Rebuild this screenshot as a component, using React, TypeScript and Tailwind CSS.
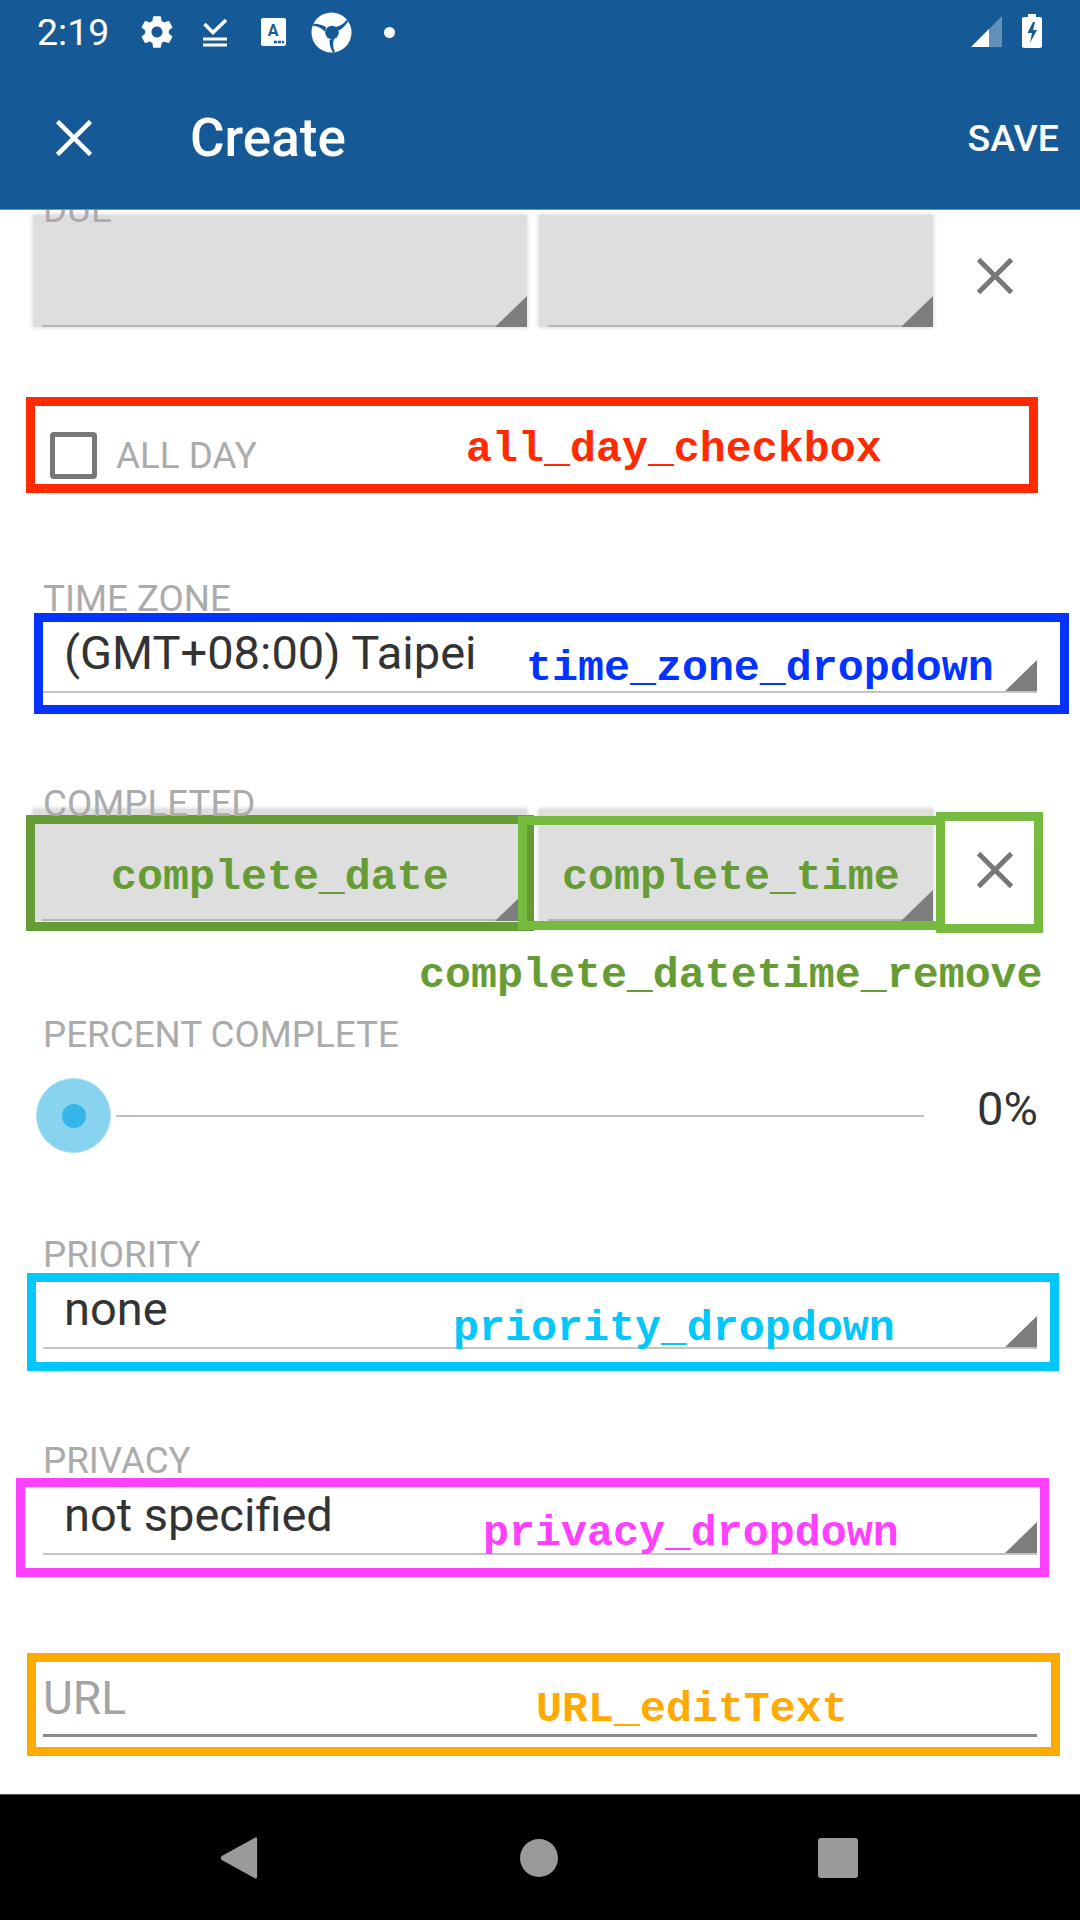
const roboto = "font-['Roboto',sans-serif]";

function Ann({ box, color, label, labelPos }: { box: string; color: string; label?: string; labelPos?: string }) {
  return (
    <>
      <div className={`absolute border-[9px] pointer-events-none ${box} ${color}`} />
      {label ? (
        <span className={`absolute whitespace-nowrap font-['Liberation_Mono',monospace] font-bold text-[43.300px] leading-[50px] ${labelPos} ${color}`}>{label}</span>
      ) : null}
    </>
  );
}

function Tri() {
  return (
    <svg className="absolute right-0 bottom-0" width="32" height="31" viewBox="0 0 32 31">
      <path d="M0 31L32 0V31Z" fill="#7d7d7d" />
    </svg>
  );
}

function X({ size, color, w }: { size: number; color: string; w: number }) {
  return (
    <svg width={size} height={size} viewBox="0 0 36 36" fill="none" stroke={color} strokeWidth={w}>
      <path d="M1.500 1.500L34.500 34.500M34.500 1.500L1.500 34.500" />
    </svg>
  );
}

function Label({ children, className = "" }: { children: React.ReactNode; className?: string }) {
  return <div className={`relative z-10 text-[#ababab] text-[36.750px] leading-[42px] pl-[43px] ${className}`}>{children}</div>;
}

function Spinner({ value }: { value: string }) {
  return (
    <div className="relative ml-[43px] h-[75px] border-b-2 border-[#c4c4c4] w-[994px]">
      <span className="absolute left-[21px] top-[10px] text-[#333333] text-[47px] leading-[50px] whitespace-nowrap">{value}</span>
      <Tri />
    </div>
  );
}

function DateBox({ width }: { width: string }) {
  return (
    <div className={`relative h-[112px] bg-[#dedede] shadow-[0_0_5px_#cfcfcf] ${width}`}>
      <div className="absolute left-[9px] right-0 bottom-0 h-[2px] bg-[#b8b8b8]" />
      <Tri />
    </div>
  );
}

function DateBoxes() {
  return (
    <div className="flex items-start pl-[33px] gap-[12px]">
      <DateBox width="w-[494px]" />
      <DateBox width="w-[394px]" />
      <div className="ml-[32px] mt-[43px]">
        <X size={36} color="#777777" w={5} />
      </div>
    </div>
  );
}

const blue = "#155a96";
const slit = "M25 15.500C30 14.500 34 12 36.500 8L38 9.500C36 13.500 32.500 17 28.500 19Z";

export default function App() {
  return (
    <div className={`w-[1080px] h-[1920px] flex flex-col bg-white overflow-hidden ${roboto}`}>
      <header className="relative z-20 h-[210px] shrink-0 bg-[#155a96] text-white border-b border-[#5f92c0]">
        <div className="h-[64px] flex items-center relative">
          <span className="ml-[37px] mt-[2px] w-[72px] text-[37.500px] leading-none whitespace-nowrap">2:19</span>
          <svg className="ml-[29px]" width="38" height="38" viewBox="0 0 24 24" fill="#fff">
            <path d="M19.43 12.98c.04-.32.07-.64.07-.98s-.03-.66-.07-.98l2.11-1.65c.19-.15.24-.42.12-.64l-2-3.46c-.12-.22-.39-.3-.61-.22l-2.49 1c-.52-.4-1.08-.73-1.69-.98l-.38-2.65C14.46 2.18 14.25 2 14 2h-4c-.25 0-.46.18-.49.42l-.38 2.65c-.61.25-1.17.59-1.69.98l-2.49-1c-.23-.09-.49 0-.61.22l-2 3.46c-.13.22-.07.49.12.64l2.11 1.65c-.04.32-.07.65-.07.98s.03.66.07.98l-2.11 1.65c-.19.15-.24.42-.12.64l2 3.46c.12.22.39.3.61.22l2.49-1c.52.4 1.08.73 1.69.98l.38 2.65c.03.24.24.42.49.42h4c.25 0 .46-.18.49-.42l.38-2.65c.61-.25 1.17-.59 1.69-.98l2.49 1c.23.09.49 0 .61-.22l2-3.46c.12-.22.07-.49-.12-.64l-2.11-1.65zM12 15.500c-1.93 0-3.500-1.57-3.500-3.500s1.57-3.500 3.500-3.500 3.500 1.57 3.500 3.500-1.57 3.500-3.500 3.500z" />
          </svg>
          <svg className="ml-[27px]" width="24" height="29" viewBox="0 0 24 29" fill="none" stroke="#fff" strokeWidth="3">
            <path d="M1.500 6L10 14.500L23 2" strokeWidth="3.500" />
            <path d="M0 21h24M0 27h24" />
          </svg>
          <svg className="ml-[34px]" width="25" height="28" viewBox="0 0 25 28">
            <rect width="25" height="28" rx="2" fill="#fff" />
            <text x="12" y="18" textAnchor="middle" fontSize="16" fontWeight="700" fill={blue} fontFamily="Roboto">A</text>
            <path d="M13 24h3M17 24h3M21 24h2" stroke={blue} strokeWidth="2.500" />
          </svg>
          <svg className="ml-[25px]" width="41" height="41" viewBox="0 0 42 42">
            <circle cx="21" cy="21" r="20.500" fill="#fff" />
            <circle cx="21.500" cy="21" r="7" fill={blue} />
            <g fill={blue}>
              <path d={slit} />
              <path transform="rotate(120 21 21)" d={slit} />
              <path transform="rotate(240 21 21)" d={slit} />
            </g>
          </svg>
          <div className="ml-[32px] w-[11px] h-[11px] rounded-full bg-white" />
          <svg className="absolute left-[971px] top-[16px]" width="31" height="31" viewBox="0 0 31 31">
            <path d="M0 31L31 0V31Z" fill="#fff" fillOpacity="0.32" />
            <path d="M0 31L18 13V31Z" fill="#fff" />
          </svg>
          <svg className="absolute left-[1022px] top-[14px]" width="20" height="34" viewBox="0 0 20 34">
            <path d="M6 0h8v3h4a2 2 0 0 1 2 2v27a2 2 0 0 1-2 2H2a2 2 0 0 1-2-2V5a2 2 0 0 1 2-2h4Z" fill="#fff" />
            <path d="M11 8L5.500 19H10L8 29L15 16H11L13 8Z" fill={blue} />
          </svg>
        </div>
        <div className="h-[145px] flex items-center pt-[2px]">
          <div className="ml-[56px]">
            <X size={36} color="#ffffff" w={4.500} />
          </div>
          <h1 className="ml-[98px] mt-[2px] text-[53px] leading-none font-medium">Create</h1>
          <span className="ml-auto mr-[21px] mt-[2px] text-[37.500px] leading-none font-medium">SAVE</span>
        </div>
      </header>

      <main className="relative flex-1 min-h-0 overflow-hidden">
        <div className="mt-[-21px]">
          <Label>DUE</Label>
          <div className="mt-[-16px]">
            <DateBoxes />
          </div>

          <div className="relative mt-[70px] h-[96px]">
            <div className="flex items-center h-full pl-[50px] pt-[21px]">
              <div className="w-[47px] h-[47px] border-[5px] border-[#777777] rounded-[4px]" />
              <span className="ml-[19px] mt-[1px] text-[36.750px] text-[#ababab]">ALL DAY</span>
            </div>
            <Ann box="left-[26px] top-0 w-[1012px] h-[96px]" color="border-[#ff2a00] text-[#ff2a00]" label="all_day_checkbox" labelPos="left-[466px] top-[28px]" />
          </div>

          <Label className="mt-[85px]">TIME ZONE</Label>
          <div className="relative mt-[-2px]">
            <Spinner value="(GMT+08:00) Taipei" />
            <Ann box="left-[34px] top-[-5px] w-[1035px] h-[101px]" color="border-[#0433ff] text-[#0433ff]" label="time_zone_dropdown" labelPos="left-[526px] top-[26px]" />
          </div>

          <Label className="mt-[90px]">COMPLETED</Label>
          <div className="relative mt-[-16px]">
            <DateBoxes />
            <Ann box="left-[26px] top-[6px] w-[508px] h-[116px]" color="border-[#669c35] text-[#669c35]" label="complete_date" labelPos="left-[111px] top-[44px]" />
            <Ann box="left-[518px] top-[7px] w-[427px] h-[114px]" color="border-[#76bb40] text-[#669c35]" label="complete_time" labelPos="left-[562px] top-[44px]" />
            <Ann box="left-[936px] top-[3px] w-[107px] h-[121px]" color="border-[#76bb40] text-[#669c35]" label="complete_datetime_remove" labelPos="left-[419px] top-[142px]" />
          </div>

          <Label className="mt-[93px]">PERCENT COMPLETE</Label>
          <div className="flex items-center h-[75px] mt-[22px] pl-[36px]">
            <div className="flex items-center justify-center w-[75px] h-[75px] rounded-full bg-[#87d3f0] border border-[#a8dff4]">
              <div className="w-[24px] h-[24px] rounded-full bg-[#35b5e8]" />
            </div>
            <div className="ml-[5px] w-[808px] h-[2px] bg-[#bdbdbd]" />
            <span className="ml-[53px] mt-[-14px] text-[47px] leading-[56px] text-[#333333]">0%</span>
          </div>

          <Label className="mt-[81px]">PRIORITY</Label>
          <div className="relative mt-[-2px]">
            <Spinner value="none" />
            <Ann box="left-[27px] top-[-1px] w-[1032px] h-[98px]" color="border-[#00c7fc] text-[#00c7fc]" label="priority_dropdown" labelPos="left-[453px] top-[30px]" />
          </div>

          <Label className="mt-[91px]">PRIVACY</Label>
          <div className="relative mt-[-2px]">
            <Spinner value="not specified" />
            <Ann box="left-[16px] top-[-2px] w-[1033px] h-[99px]" color="border-[#ff40ff] text-[#ff40ff]" label="privacy_dropdown" labelPos="left-[483px] top-[29px]" />
          </div>

          <div className="relative mt-[98px] h-[103px]">
            <div className="ml-[43px] pt-[20px] h-[84px] w-[994px] border-b-[3px] border-[#8c8c8c] text-[46px] leading-[50px] text-[#a3a3a3]">URL</div>
            <Ann box="left-[27px] top-0 w-[1033px] h-[103px]" color="border-[#ffaa00] text-[#ffaa00]" label="URL_editText" labelPos="left-[536px] top-[32px]" />
          </div>
        </div>
      </main>

      <nav className="h-[126px] shrink-0 bg-black flex items-center pl-[219px] border-t border-[#555555]">
        <svg width="40" height="44" viewBox="0 0 40 46">
          <path d="M37 1.500Q39 1 39 4V42Q39 45 37 44.500L2 25Q0 23 2 21Z" fill="#9a9a9a" />
        </svg>
        <div className="ml-[261px] w-[38px] h-[38px] rounded-full bg-[#9a9a9a]" />
        <div className="ml-[260px] w-[40px] h-[40px] rounded-[3px] bg-[#9a9a9a]" />
      </nav>
    </div>
  );
}
